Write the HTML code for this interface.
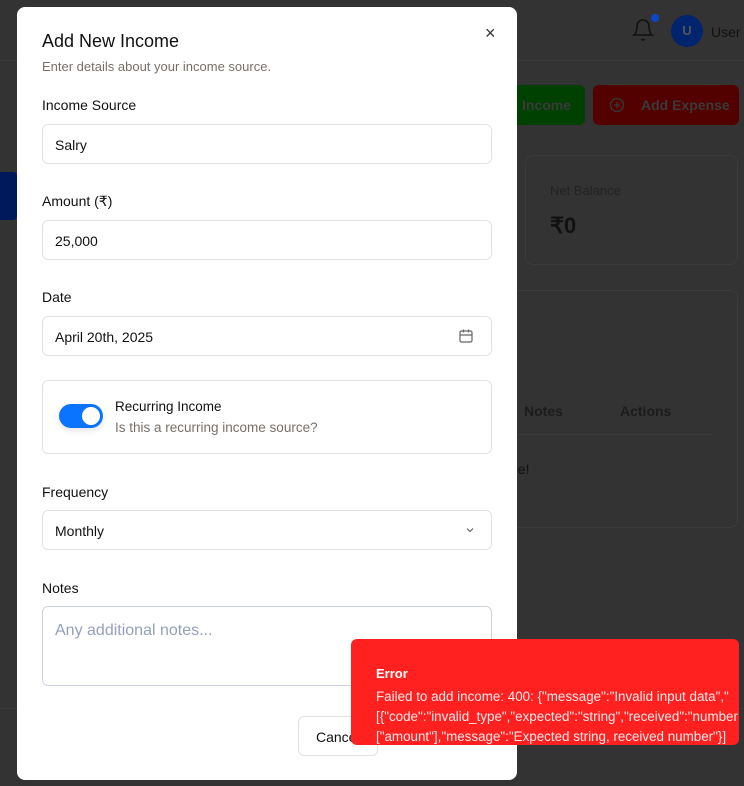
<!DOCTYPE html>
<html><head><style>
*{box-sizing:border-box;margin:0;padding:0}
body{width:744px;height:786px;overflow:hidden;background:#333;font-family:"Liberation Sans",sans-serif;position:relative}
.abs{position:absolute}
.modal{left:17px;top:7px;width:500px;height:773px;background:#fff;border-radius:8px}
.lbl{position:absolute;left:25px;font-size:14px;color:#111;font-weight:500}
.inp{position:absolute;left:25px;width:450px;height:40px;border:1px solid #e2e2e2;border-radius:6px;font-size:14px;color:#111;padding:12px 12px;line-height:16px}
</style></head><body>
<!-- background -->
<div class="abs" style="left:0;top:60px;width:744px;height:1px;background:#3a3a3a"></div>
<div class="abs" style="left:0;top:172px;width:17px;height:48px;background:#00195a;border-radius:0 4px 4px 0"></div>
<svg class="abs" style="left:631px;top:18px" width="24" height="24" viewBox="0 0 24 24" fill="none" stroke="#111" stroke-width="1.6"><path d="M6 8a6 6 0 0 1 12 0c0 7 3 9 3 9H3s3-2 3-9"/><path d="M10.3 21a1.94 1.94 0 0 0 3.4 0"/></svg>
<div class="abs" style="left:651px;top:14px;width:8px;height:8px;border-radius:50%;background:#0d47c9"></div>
<div class="abs" style="left:671px;top:15px;width:32px;height:32px;border-radius:50%;background:#00256e;color:#555;font-size:13px;font-weight:bold;text-align:center;line-height:32px">U</div>
<div class="abs" style="left:711px;top:24px;font-size:14px;color:#111">User</div>
<div class="abs" style="left:500px;top:85px;width:85px;height:40px;background:#004000;border-radius:6px;color:#3a3a3a;font-weight:bold;font-size:14px;line-height:40px;padding-left:22px">Income</div>
<div class="abs" style="left:593px;top:85px;width:146px;height:40px;background:#520000;border-radius:6px;color:#3a3a3a;font-weight:bold;font-size:14px;line-height:40px;padding-left:48px">Add Expense</div>
<svg class="abs" style="left:609px;top:97px" width="16" height="16" viewBox="0 0 16 16" fill="none" stroke="#3a3a3a" stroke-width="1.3"><circle cx="8" cy="8" r="6.5"/><path d="M8 5v6M5 8h6"/></svg>
<div class="abs" style="left:525px;top:155px;width:213px;height:110px;border:1px solid #3b3b3b;border-radius:8px"></div>
<div class="abs" style="left:550px;top:183px;font-size:13px;color:#222">Net Balance</div>
<div class="abs" style="left:550px;top:213px;font-size:22px;color:#111;font-weight:bold">₹0</div>
<div class="abs" style="left:480px;top:290px;width:258px;height:238px;border:1px solid #3b3b3b;border-radius:8px"></div>
<div class="abs" style="left:524px;top:403px;font-size:14px;color:#1c1c1c;font-weight:bold">Notes</div>
<div class="abs" style="left:620px;top:403px;font-size:14px;color:#1c1c1c;font-weight:bold">Actions</div>
<div class="abs" style="left:500px;top:434px;width:214px;height:1px;background:#3a3a3a"></div>
<div class="abs" style="left:510px;top:461px;font-size:14px;color:#111">ne!</div>
<div class="abs" style="left:0;top:708px;width:744px;height:1px;background:#3a3a3a"></div>
<!-- modal -->
<div class="abs modal">
<div class="abs" style="left:25px;top:24px;font-size:18px;font-weight:500;color:#111">Add New Income</div>
<div class="abs" style="left:25px;top:52px;font-size:13px;color:#7a6f68">Enter details about your income source.</div>
<div class="abs" style="left:468px;top:16px;font-size:18px;color:#333">×</div>
<div class="lbl" style="top:90px">Income Source</div>
<div class="inp" style="top:117px">Salry</div>
<div class="lbl" style="top:186px">Amount (₹)</div>
<div class="inp" style="top:213px">25,000</div>
<div class="lbl" style="top:282px">Date</div>
<div class="inp" style="top:309px">April 20th, 2025</div>
<svg class="abs" style="left:441px;top:321px" width="16" height="16" viewBox="0 0 16 16" fill="none" stroke="#666" stroke-width="1.2"><rect x="2" y="3" width="12" height="11" rx="1.5"/><path d="M2 7h12M5.5 1.5v3M10.5 1.5v3"/></svg>
<div class="abs" style="left:25px;top:373px;width:450px;height:74px;border:1px solid #e2e2e2;border-radius:6px"></div>
<div class="abs" style="left:42px;top:397px;width:44px;height:24px;border-radius:12px;background:#0a74ff;box-shadow:0 3px 6px rgba(0,0,0,.1)"><div style="position:absolute;right:3px;top:3px;width:18px;height:18px;border-radius:50%;background:#fff"></div></div>
<div class="abs" style="left:98px;top:392px;font-size:13.5px;color:#111;font-weight:500">Recurring Income</div>
<div class="abs" style="left:98px;top:413px;font-size:13.5px;color:#7a6f68">Is this a recurring income source?</div>
<div class="lbl" style="top:477px">Frequency</div>
<div class="inp" style="top:503px">Monthly</div>
<svg class="abs" style="left:447px;top:517px" width="12" height="12" viewBox="0 0 12 12" fill="none" stroke="#666" stroke-width="1.2"><path d="M3 4.5l3 3 3-3"/></svg>
<div class="lbl" style="top:573px">Notes</div>
<div class="inp" style="top:599px;height:80px;border-color:#ccd3e0;font-size:16px;color:#94a0ba;padding-top:16px">Any additional notes...</div>
<div class="abs" style="left:281px;top:709px;width:80px;height:40px;border:1px solid #e2e2e2;border-radius:6px;font-size:14px;color:#111;font-weight:500;padding:12px 17px">Cancel</div>
</div>
<!-- toast -->
<div class="abs" style="left:351px;top:639px;width:388px;height:106px;background:#ff2020;border-radius:6px;overflow:hidden;color:#fff">
<div class="abs" style="left:25px;top:27px;font-size:13px;font-weight:bold">Error</div>
<div class="abs" style="left:25px;top:48px;font-size:13.4px;line-height:20px;white-space:nowrap;color:#ffe8e8">Failed to add income: 400: {"message":"Invalid input data","<br>[{"code":"invalid_type","expected":"string","received":"number<br>["amount"],"message":"Expected string, received number"}]</div>
</div>
</body></html>
